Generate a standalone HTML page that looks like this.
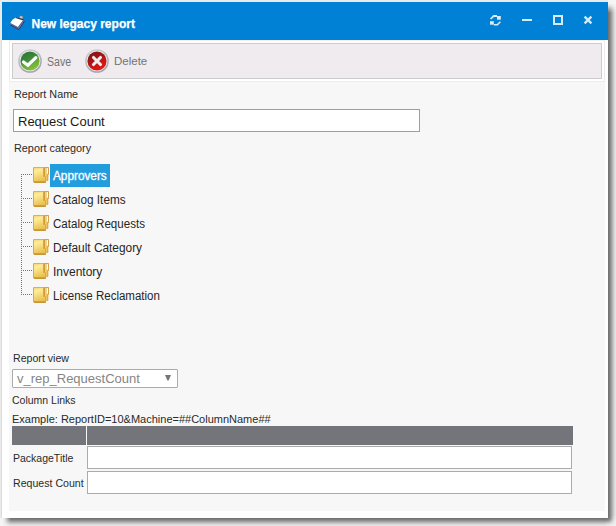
<!DOCTYPE html>
<html><head><meta charset="utf-8">
<style>
*{margin:0;padding:0;box-sizing:border-box}
html,body{width:616px;height:526px;overflow:hidden;background:#f0f0f0;font-family:"Liberation Sans",sans-serif}
.a{position:absolute;white-space:nowrap;line-height:1}
#win{left:1px;top:1px;width:607px;height:517px;border-left:1px solid #dcdcdc;border-top:1px solid #efe8e1;background:#fff;box-shadow:4px 4px 5px rgba(0,0,0,.57)}
#title{left:2px;top:2px;width:606px;height:38px;background:#0081d6}
#tbwrap{left:9px;top:40px;width:596px;height:42px;border:1px solid #ececec;border-top-color:#f6efe8;background:#fff}
#tb{left:12px;top:43px;width:590px;height:36px;border:1px solid #cccccc;background:#efebef}
#content{left:9px;top:82px;width:596px;height:429px;background:#f7f7f7}
.lbl{font-size:11px;color:#2a2a2a}
.tree{font-size:12px;color:#262626;transform-origin:0 0}
.inp{background:#fff;border:1px solid #a3a3a8}
.dot{background-image:linear-gradient(to right,#707070 50%,transparent 50%);background-size:2px 1px;height:1px}
.vdot{background-image:linear-gradient(to bottom,#707070 50%,transparent 50%);background-size:1px 2px;width:1px}
</style></head><body>
<div id="win" class="a"></div>
<div class="a" style="left:606px;top:516px;width:10px;height:10px;background:radial-gradient(circle at 2px 2px,rgba(240,240,240,0) 3px,rgba(240,240,240,.6) 11px)"></div>
<div class="a" style="left:608px;top:0;width:8px;height:14px;background:linear-gradient(to bottom,rgba(246,246,246,.95) 3px,rgba(246,246,246,0) 13px)"></div>
<div class="a" style="left:0;top:518px;width:12px;height:8px;background:linear-gradient(to right,rgba(246,246,246,.9) 2px,rgba(246,246,246,0) 11px)"></div>
<div id="title" class="a"></div>
<div class="a" style="left:1px;top:1px;width:1px;height:39px;background:#f0e8e1"></div>
<!-- title icon -->
<svg class="a" style="left:0;top:0" width="30" height="34" viewBox="0 0 30 34">
  <path d="M10.2 23.2 L18 27.3 L24 19.3 L24.7 20.9 L18.9 29.7 L10.4 25 Z" fill="#7078b8"/>
  <path d="M10.4 24.9 L18.9 29.5 L24.6 20.9" fill="none" stroke="#2a2e58" stroke-width=".9"/>
  <path d="M10.2 23.2 Q12 19.3 16 17.2 L24 19.3 L18 27.3 Z" fill="#ffffff"/>
  <path d="M10.3 23.4 L18 27.5 L24 19.5" fill="none" stroke="#50506a" stroke-width=".7"/>
  <path d="M16 17.1 L24 19.2 L23.4 20.4 L15.4 18.1 Z" fill="#34343e"/>
  <path d="M19.4 17.8 L20 15.8 L23 16.5 L22.6 18.6 Z" fill="#ddd6dd" stroke="#6a6a78" stroke-width=".5"/>
</svg>
<div id="t_title" class="a" style="left:31.5px;top:18px;font-size:12px;font-weight:bold;color:#fff;-webkit-text-stroke:0.25px #fff">New legacy report</div>
<!-- window buttons -->
<svg class="a" style="left:486px;top:10px" width="20" height="20" viewBox="0 0 20 20">
  <g fill="#d6ebf9">
    <rect x="11" y="6" width="3.8" height="3.7"/>
    <path d="M4 8.4 L7.3 5.1 L11 5.1 L11 6.9 L8 6.9 L5.1 9.6 Z"/>
    <rect x="4" y="11.2" width="3.8" height="3.5"/>
    <path d="M7.8 13.9 L11 13.9 L13.8 11.2 L14.9 12.2 L11.7 15.6 L7.8 15.6 Z"/>
  </g>
</svg>
<div class="a" style="left:522px;top:19px;width:10px;height:2px;background:#d6ebf9"></div>
<div class="a" style="left:553px;top:15px;width:10px;height:10px;border:2px solid #d6ebf9"></div>
<svg class="a" style="left:582px;top:14px" width="12" height="12" viewBox="0 0 12 12">
  <path d="M2.6 2.6 L9.4 9.4 M9.4 2.6 L2.6 9.4" stroke="#d6ebf9" stroke-width="2.3"/>
</svg>

<div id="tbwrap" class="a"></div>
<div id="tb" class="a"></div>
<!-- save icon -->
<svg class="a" style="left:18px;top:49px" width="24" height="24" viewBox="0 0 24 24">
  <defs>
    <linearGradient id="gr" x1="0.2" y1="0" x2="0.7" y2="1"><stop offset="0" stop-color="#2c7338"/><stop offset="0.45" stop-color="#3f8c3a"/><stop offset="0.55" stop-color="#5aa536"/><stop offset="1" stop-color="#8cc63c"/></linearGradient>
    <linearGradient id="rd" x1="0.2" y1="0" x2="0.7" y2="1"><stop offset="0" stop-color="#861212"/><stop offset="0.45" stop-color="#a51818"/><stop offset="0.55" stop-color="#c21414"/><stop offset="1" stop-color="#e41818"/></linearGradient>
    <linearGradient id="ring" x1="0" y1="0" x2="0.4" y2="1"><stop offset="0" stop-color="#d4d4d8"/><stop offset="1" stop-color="#a4a4aa"/></linearGradient>
  </defs>
  <circle cx="12" cy="12" r="11.1" fill="#f2f1f3" stroke="url(#ring)" stroke-width="1.5"/>
  <circle cx="12" cy="12" r="9.6" fill="url(#gr)"/>
  <path d="M5.5 13 L9.8 16.3 L17.8 8.6" fill="none" stroke="#fff" stroke-width="3.2" stroke-linecap="round" stroke-linejoin="round"/>
</svg>
<div id="t_save" class="a" style="left:47px;top:55.5px;font-size:12px;color:#747474;transform:scaleX(0.88);transform-origin:0 0">Save</div>
<!-- delete icon -->
<svg class="a" style="left:85px;top:49px" width="24" height="24" viewBox="0 0 24 24">
  <circle cx="12" cy="12" r="11.1" fill="#f2f1f3" stroke="url(#ring)" stroke-width="1.5"/>
  <circle cx="12" cy="12" r="9.6" fill="url(#rd)"/>
  <path d="M8.5 8.5 L15.5 15.5 M15.5 8.5 L8.5 15.5" fill="none" stroke="#eeeeee" stroke-width="3.1" stroke-linecap="round"/>
</svg>
<div id="t_delete" class="a" style="left:114px;top:55.5px;font-size:11.5px;color:#747474">Delete</div>

<div id="content" class="a"></div>
<div id="t_rn" class="a lbl" style="left:13.5px;top:89px;transform:scaleX(0.98);transform-origin:0 0">Report Name</div>
<div class="a inp" style="left:13px;top:109px;width:407px;height:23px;border-color:#9d9da2"></div>
<div id="t_rc" class="a" style="left:18px;top:115px;font-size:13px;color:#1a1a1a">Request Count</div>
<div id="t_cat" class="a lbl" style="left:13.5px;top:143px;transform:scaleX(0.985);transform-origin:0 0">Report category</div>

<!-- tree -->
<div class="a vdot" style="left:21px;top:174px;height:121px"></div>
<div class="a dot" style="left:21px;top:174px;width:12px"></div>
<div class="a dot" style="left:21px;top:198px;width:12px"></div>
<div class="a dot" style="left:21px;top:222px;width:12px"></div>
<div class="a dot" style="left:21px;top:246px;width:12px"></div>
<div class="a dot" style="left:21px;top:270px;width:12px"></div>
<div class="a dot" style="left:21px;top:294px;width:12px"></div>

<svg width="0" height="0" style="position:absolute">
  <defs>
    <linearGradient id="fg" x1="0" y1="0" x2="0.3" y2="1"><stop offset="0" stop-color="#f8dc78"/><stop offset="0.3" stop-color="#fdec98"/><stop offset="1" stop-color="#ecc152"/></linearGradient>
    <symbol id="folder" viewBox="0 0 16 16">
      <path d="M10.5 0.5 H15.5 V7.5 H14.8 V13.5 H12.5 V15.5 H10.5 Z" fill="#eab94e" stroke="#d4a24a" stroke-width="1"/>
      <rect x="11" y="1" width="1" height="13" fill="#d59c3e"/>
      <rect x="12" y="1" width="1.6" height="13" fill="#f4cc6c"/>
      <rect x="13.7" y="1.1" width="1.3" height="5.6" fill="#ffffff"/>
      <path d="M0.5 0.6 H10.5 V9.5 H12.5 V15 H0.5 Z" fill="url(#fg)" stroke="#d8aa4c" stroke-width="1"/>
            <rect x="1" y="14.3" width="11.5" height="1.7" fill="#c6963a"/>
    </symbol>
  </defs>
</svg>
<svg class="a" style="left:33px;top:167px" width="16" height="16"><use href="#folder"/></svg>
<svg class="a" style="left:33px;top:191px" width="16" height="16"><use href="#folder"/></svg>
<svg class="a" style="left:33px;top:215px" width="16" height="16"><use href="#folder"/></svg>
<svg class="a" style="left:33px;top:239px" width="16" height="16"><use href="#folder"/></svg>
<svg class="a" style="left:33px;top:263px" width="16" height="16"><use href="#folder"/></svg>
<svg class="a" style="left:33px;top:287px" width="16" height="16"><use href="#folder"/></svg>

<div class="a" style="left:50px;top:164px;width:60px;height:23px;background:#219ddd"></div>
<div id="t_i1" class="a tree" style="left:53px;top:170px;color:#fff;-webkit-text-stroke:0.3px #fff;transform:scaleX(0.982)">Approvers</div>
<div id="t_i2" class="a tree" style="left:53px;top:194px;transform:scaleX(0.981)">Catalog Items</div>
<div id="t_i3" class="a tree" style="left:53px;top:218px;transform:scaleX(0.964)">Catalog Requests</div>
<div id="t_i4" class="a tree" style="left:53px;top:242px;transform:scaleX(0.989)">Default Category</div>
<div id="t_i5" class="a tree" style="left:53px;top:266px">Inventory</div>
<div id="t_i6" class="a tree" style="left:53px;top:290px;transform:scaleX(0.96)">License Reclamation</div>

<div id="t_rv" class="a lbl" style="left:12.5px;top:353px;transform:scaleX(0.964);transform-origin:0 0">Report view</div>
<div class="a inp" style="left:12px;top:369px;width:166px;height:19px;border-color:#ababab;border-radius:1px"></div>
<div id="t_combo" class="a" style="left:17px;top:371.5px;font-size:13px;color:#858585">v_rep_RequestCount</div>
<svg class="a" style="left:165px;top:375px" width="6" height="6" viewBox="0 0 6 6"><path d="M0 0 H6 L3.6 5.6 L2.4 5.6 Z" fill="#767676"/></svg>
<div id="t_cl" class="a lbl" style="left:12px;top:395px;font-size:10.5px">Column Links</div>
<div id="t_ex" class="a lbl" style="left:12px;top:414px">Example: ReportID=10&amp;Machine=##ColumnName##</div>

<div class="a" style="left:12px;top:426px;width:561px;height:19px;background:#74757a"></div>
<div class="a" style="left:86px;top:426px;width:1px;height:19px;background:#f7f7f7"></div>
<div id="t_pt" class="a lbl" style="left:13px;top:453px;font-size:10.5px">PackageTitle</div>
<div class="a inp" style="left:87px;top:446px;width:485px;height:23px;border-color:#ababab"></div>
<div id="t_rq" class="a lbl" style="left:13px;top:478px;font-size:10.6px">Request Count</div>
<div class="a inp" style="left:87px;top:471px;width:485px;height:23px;border-color:#ababab"></div>
</body></html>
